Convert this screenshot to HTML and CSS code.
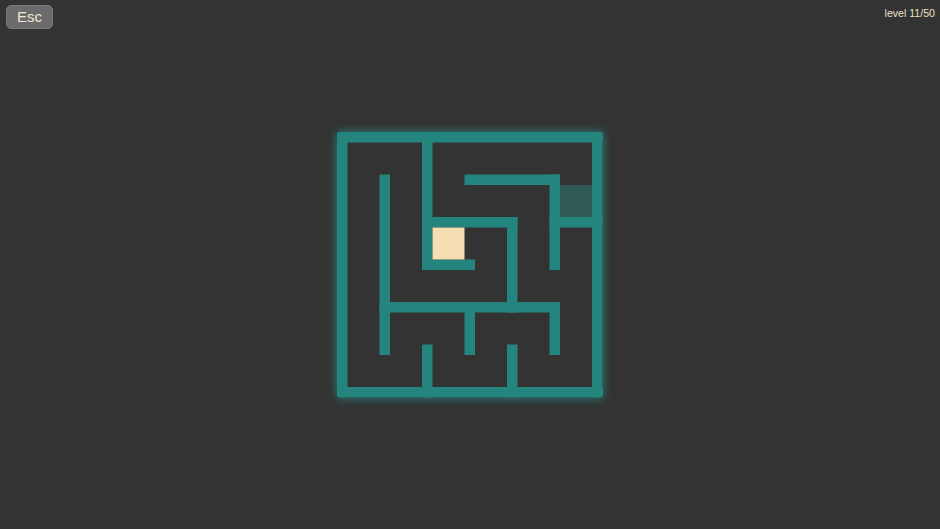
FILE: index.html
```html
<!DOCTYPE html>
<html>
<head>
<meta charset="utf-8">
<link rel="stylesheet" href="styles.css">
</head>
<body>
<div class="topbar">
  <button class="esc">Esc</button>
  <div class="level">level 11/50</div>
</div>
<main class="stage">
  <div class="maze">
    <svg width="266" height="266" viewBox="0 0 266 266" xmlns="http://www.w3.org/2000/svg">
      <rect class="goal" x="223" y="53" width="32" height="32"/>
      <g class="walls">
        <rect x="0" y="0" width="266" height="10.5" rx="3"/>
        <rect x="0" y="255" width="266" height="10.5" rx="3"/>
        <rect x="0" y="0" width="10.5" height="265.5" rx="3"/>
        <rect x="255" y="0" width="10.5" height="265.5" rx="3"/>
        <rect x="85" y="0" width="10.5" height="138"/>
        <rect x="85" y="127.5" width="53" height="10.5"/>
        <rect x="42.5" y="42.5" width="10.5" height="180.5"/>
        <rect x="127.5" y="42.5" width="95.5" height="10.5"/>
        <rect x="212.5" y="42.5" width="10.5" height="95.5"/>
        <rect x="212.5" y="85" width="53" height="10.5"/>
        <rect x="85" y="85" width="95.5" height="10.5"/>
        <rect x="170" y="85" width="10.5" height="95.5"/>
        <rect x="42.5" y="170" width="180.5" height="10.5"/>
        <rect x="212.5" y="170" width="10.5" height="53"/>
        <rect x="127.5" y="170" width="10.5" height="53"/>
        <rect x="85" y="212.5" width="10.5" height="53"/>
        <rect x="170" y="212.5" width="10.5" height="53"/>
      </g>
      <rect class="player" x="95.5" y="95.5" width="32" height="32"/>
    </svg>
  </div>
</main>
</body>
</html>
```
FILE: styles.css
```css
html, body {
  margin: 0;
  padding: 0;
  width: 100%;
  height: 100%;
  background: #333333;
  overflow: hidden;
  font-family: "Liberation Sans", Arial, sans-serif;
}
.topbar {
  position: absolute;
  top: 0;
  left: 0;
  right: 0;
  display: flex;
  justify-content: space-between;
  align-items: flex-start;
  padding: 5px 5px 0 6px;
}
.esc {
  width: 47px;
  height: 24px;
  padding: 0;
  border: 1px solid #7a7a7a;
  border-radius: 5px;
  background: #6b6b6b;
  color: #efe6d4;
  font-family: "Liberation Sans", Arial, sans-serif;
  font-size: 15px;
  line-height: 22px;
}
.level {
  color: #efe2c6;
  font-size: 10.6px;
  line-height: 14px;
  padding-top: 1px;
}
.stage {
  height: 100%;
  display: flex;
  align-items: center;
  justify-content: center;
}
.maze {
  width: 266px;
  height: 266px;
  border-radius: 4px;
  box-shadow: 0 0 8px 1px rgba(36, 150, 145, 0.65);
}
.maze svg {
  display: block;
}
.walls rect {
  fill: #24857f;
}
.goal {
  fill: #2f5955;
}
.player {
  fill: #f5deb3;
}
```
